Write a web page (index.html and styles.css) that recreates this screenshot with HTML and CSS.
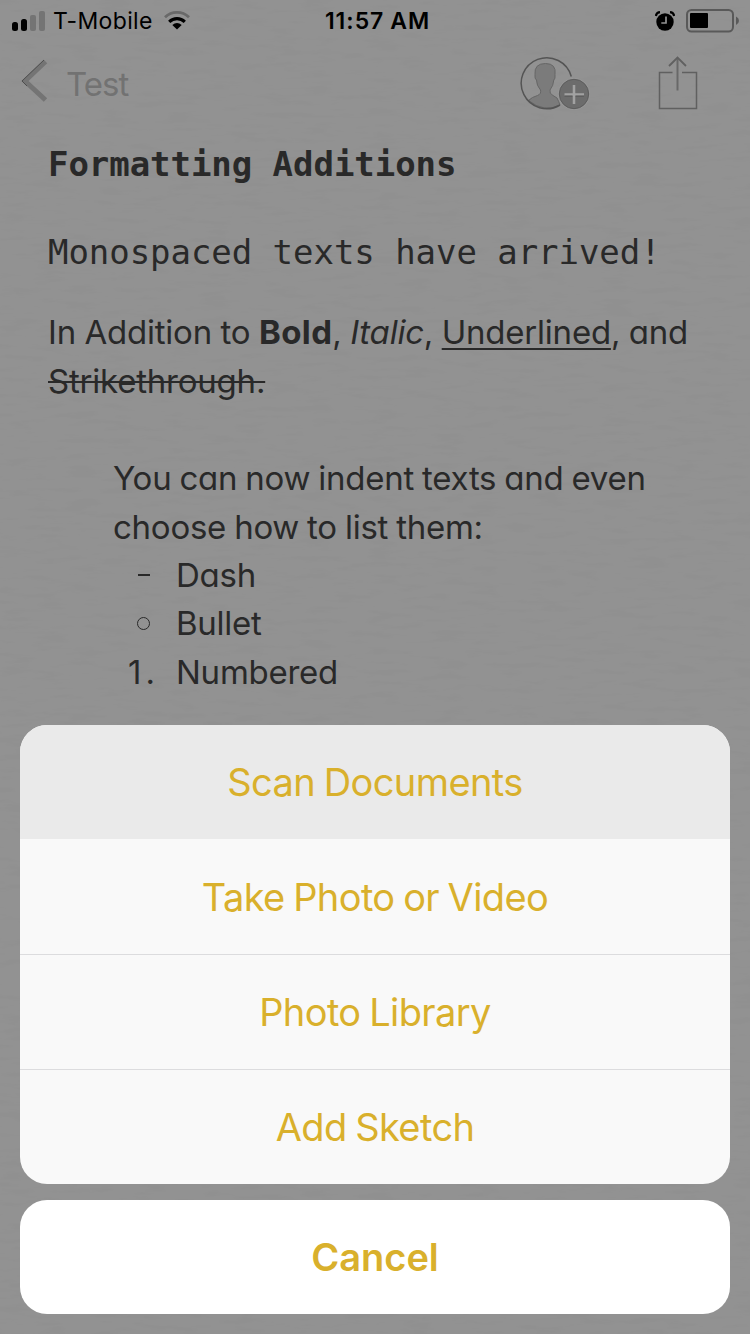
FILE: index.html
```html
<!DOCTYPE html>
<html lang="en">
<head>
    <meta charset="UTF-8">
    <meta name="viewport" content="width=device-width, initial-scale=1.0">
    <title>Notes</title>
    <link rel="stylesheet" href="styles.css">
</head>
<body>

    <!-- Paper grain -->
    <svg class="paper" width="750" height="1334" aria-hidden="true">
        <filter id="grain" x="0" y="0" width="100%" height="100%">
            <feTurbulence type="fractalNoise" baseFrequency="0.03 0.16" numOctaves="3" seed="4" />
            <feColorMatrix values="0 0 0 0 0  0 0 0 0 0  0 0 0 0 0  0.9 0 0 0 -0.4" />
        </filter>
        <rect width="750" height="1334" filter="url(#grain)" />
    </svg>

    <!-- Status Bar -->
    <div class="status-bar">
        <div class="status-left">
            <svg width="34" height="22" viewBox="0 0 34 22">
                <rect x="0" y="12" width="6" height="9" rx="2.5" />
                <rect x="9" y="9" width="6" height="12" rx="2.5" />
                <rect x="18" y="5" width="6" height="16" rx="2" fill="#747474" />
                <rect x="27" y="1" width="6" height="20" rx="2" fill="#747474" />
            </svg>
            <span class="carrier">T-Mobile</span>
            <svg class="wifi" width="26" height="19" viewBox="0 0 26 19">
                <path d="M1 6.2 A17.5 17.5 0 0 1 25 6.2" fill="none" stroke="#696969" stroke-width="2.8" />
                <path d="M5.2 10.8 A11.3 11.3 0 0 1 20.8 10.8" fill="none" stroke="#000" stroke-width="3.2" />
                <path d="M8.3 14 Q13 10.2 17.7 14 L13 18.4 Z" />
            </svg>
        </div>
        <span class="time">11:57 AM</span>
        <div class="status-right">
            <svg width="20" height="20" viewBox="0 0 20 20">
                <circle cx="10" cy="11" r="8.7" />
                <path d="M.8 5 Q1.5 1.5 5 1.2 M19.2 5 Q18.5 1.5 15 1.2" fill="none" stroke="#000" stroke-width="2.2" />
                <path d="M11 5.5 V12 H6.3" fill="none" stroke="#929292" stroke-width="1.7" />
            </svg>
            <svg width="54" height="24" viewBox="0 0 54 24">
                <rect x="1" y="1" width="46" height="21.5" rx="4.5" fill="none" stroke="#595959" stroke-width="2" />
                <rect x="4" y="4" width="18" height="15" rx="1" />
                <path d="M50 7.5 Q53 9 53 11.7 Q53 14.5 50 16 Z" fill="#595959" />
            </svg>
        </div>
    </div>

    <!-- Navigation -->
    <div class="nav">
        <div class="back">
            <svg width="28" height="44" viewBox="0 0 28 44">
                <path d="M24.5 2.5 L4 22 L24.5 41" fill="none" stroke="#747474" stroke-width="5" />
                <path d="M23 1 L1 22 L6 27" fill="none" stroke="#4e4e4e" stroke-width="1" />
            </svg>
            <span>Test</span>
        </div>
        <div class="actions">
            <svg width="72" height="56" viewBox="0 0 72 56">
                <path d="M9.5 44.5 Q13 41 18.5 39.5 Q22.5 38 21.5 34 Q17.5 29.5 17.5 24 Q15.5 23 16 18.5 Q15 7.5 26.5 7.5 Q37.5 7.5 36 18.5 Q36.5 23 34.8 24 Q34.5 29.5 31 34 Q30 37.5 34 39.5 L38 42 Q40 46 41 49 Q25 57 9.5 44.5 Z" fill="#7b7b7b" stroke="#666" />
                <path d="M52.3 20.5 A25.5 25.5 0 1 0 41 49" fill="none" stroke="#545454" stroke-width="1.5" />
                <circle cx="55" cy="38" r="16" fill="#979797" />
                <circle cx="55" cy="38" r="14.7" fill="#6c6c6c" stroke="#5c5c5c" />
                <path d="M55 29 V48 M45.5 38.5 H65" stroke="#a2a2a2" stroke-width="2.5" />
                <path d="M45.5 40 H53.5 M56.5 40 H65" stroke="#4c4c4c" stroke-width=".8" />
            </svg>
            <svg width="40" height="54" viewBox="0 0 40 54">
                <path d="M14.5 16.5 H1.5 V52.5 H38.5 V16.5 H24" fill="none" stroke="#606060" stroke-width="1.5" />
                <path d="M19.5 34.5 V2" fill="none" stroke="#686868" stroke-width="2" />
                <path d="M11 10 L19.5 1.5 L28 10" fill="none" stroke="#606060" stroke-width="1.8" />
            </svg>
        </div>
    </div>

    <!-- Note Body -->
    <div class="note">
        <h1>Formatting Additions</h1>
        <p class="mono">Monospaced texts have arrived!</p>
        <p class="styles">In Addition to <b>Bold</b>, <i>Italic</i>, <u>Underlined</u>, and<br><s>Strikethrough.</s></p>
        <div class="indented">
            <p>You can now indent texts and even<br>choose how to list them:</p>
            <div class="item"><span class="marker"><span class="dash"></span></span><span>Dash</span></div>
            <div class="item"><span class="marker"><span class="bullet"></span></span><span>Bullet</span></div>
            <div class="item"><span class="marker number">1.</span><span>Numbered</span></div>
        </div>
    </div>

    <!-- Action Sheet -->
    <div class="sheet">
        <div class="options">
            <button class="pressed">Scan Documents</button>
            <button>Take Photo or Video</button>
            <button>Photo Library</button>
            <button>Add Sketch</button>
        </div>
        <button class="cancel">Cancel</button>
    </div>

</body>
</html>
```
FILE: styles.css
```css
/* Global Styles */
* {
    box-sizing: border-box;
}

body {
    margin: 0;
    position: relative;
    height: 1334px;
    overflow: hidden;
    background: #929292;
    color: #292929;
    font-family: Inter, "Liberation Sans", sans-serif;
}

p, h1 {
    margin: 0;
}

svg {
    display: block;
}

.paper {
    position: absolute;
    top: 0;
    left: 0;
    z-index: -1;
    opacity: 0.035;
}

/* Status Bar */
.status-bar {
    display: grid;
    grid-template-columns: 1fr auto 1fr;
    align-items: center;
    height: 40px;
    padding: 1px 10px 0 12px;
    color: #000;
    font-size: 23px;
}

.status-left, .status-right {
    display: flex;
    align-items: center;
}

.carrier {
    margin-left: 7px;
    letter-spacing: 0.35px;
}

.wifi {
    margin-left: 11px;
}

.time {
    padding-left: 3px;
    font-weight: 600;
    letter-spacing: 1px;
    word-spacing: -1px;
}

.status-right {
    justify-content: flex-end;
    gap: 11px;
}

/* Navigation */
.nav {
    display: flex;
    justify-content: space-between;
    height: 88px;
    padding: 16px 52px 0 21px;
}

.back {
    display: flex;
    align-items: center;
    gap: 17px;
    height: 50px;
    color: #727272;
    font-size: 33px;
    letter-spacing: -1px;
}

.back span {
    padding-top: 6px;
}

.actions {
    display: flex;
    gap: 67px;
}

/* Note Body */
.note {
    padding: 12px 48px 0;
    font-size: 33px;
    line-height: 48.6px;
    letter-spacing: -0.25px;
    word-spacing: -1px;
    font-feature-settings: "cv11";
    white-space: nowrap;
}

.note h1, .mono {
    font-family: "DejaVu Sans Mono", monospace;
    font-size: 34px;
    line-height: 48px;
    letter-spacing: -0.05px;
    word-spacing: 0;
}

.mono {
    margin-top: 40px;
}

.styles {
    margin-top: 32px;
    letter-spacing: -0.22px;
    word-spacing: -0.5px;
}

.styles b {
    letter-spacing: 0.4px;
}

.styles u {
    text-decoration-thickness: 2px;
    text-underline-offset: 4px;
}

.styles s {
    text-decoration-thickness: 2px;
}

.indented {
    margin-top: 49px;
    padding-left: 65px;
    line-height: 48.4px;
}

.item {
    display: flex;
}

.marker {
    display: flex;
    align-items: center;
    justify-content: center;
    width: 63px;
    padding-right: 2px;
}

.number {
    letter-spacing: 4px;
}

.dash {
    width: 12px;
    height: 2px;
    background: #292929;
}

.bullet {
    width: 13px;
    height: 13px;
    border: 1.5px solid #292929;
    border-radius: 50%;
}

/* Action Sheet */
.sheet {
    position: absolute;
    left: 20px;
    right: 20px;
    bottom: 20px;
}

.options {
    overflow: hidden;
    border-radius: 27px;
    background: #f9f9f9;
}

.sheet button {
    display: block;
    width: 100%;
    height: 115px;
    padding: 0;
    border: 0;
    border-top: 1px solid #dcdcde;
    background: none;
    color: #d9b02c;
    font: 400 38px Inter, "Liberation Sans", sans-serif;
    letter-spacing: -0.6px;
    word-spacing: -1.5px;
}

.sheet .pressed {
    height: 114px;
    border-top: 0;
    background: #eaeaea;
}

.sheet .pressed + button {
    border-top-color: #f9f9f9;
}

.sheet .cancel {
    height: 114px;
    margin-top: 16px;
    border-top: 0;
    border-radius: 27px;
    background: #fff;
    font-weight: 600;
    letter-spacing: 0;
}
```
